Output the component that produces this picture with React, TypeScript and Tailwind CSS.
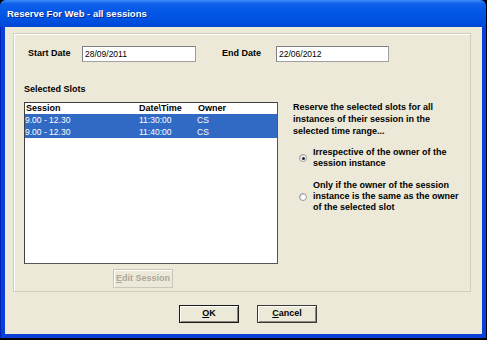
import React from "react";

const F = { fontFamily: '"Liberation Sans", Arial, sans-serif' };

function Btn({ children, w, disabled, def }: { children: React.ReactNode; w: string; disabled?: boolean; def?: boolean }) {
  return (
    <div
      className={
        "flex items-center justify-center h-full text-[9px] font-bold " +
        w +
        " " +
        (disabled
          ? "border border-[#C9C7BA] text-[#ACA899] bg-[#ECE9D8] shadow-[inset_1px_1px_0_#ffffff]"
          : def
          ? "border border-[#1a1a1a] text-black bg-[#ECE9D8] shadow-[inset_1px_1px_0_#ffffff,inset_-1px_-1px_0_#8a8878]"
          : "border border-[#3a3a3a] text-black bg-[#ECE9D8] shadow-[inset_1px_1px_0_#ffffff,inset_-1px_-1px_0_#8a8878]")
      }
    >
      {children}
    </div>
  );
}

function Radio({ checked }: { checked?: boolean }) {
  return (
    <div className="w-[8px] h-[8px] rounded-full border border-[#9a9a9a] bg-white flex items-center justify-center shadow-[inset_1px_1px_1px_#d8d8d8]">
      {checked && <div className="w-[3px] h-[3px] rounded-full bg-[#222]" />}
    </div>
  );
}

export default function App() {
  return (
    <div className="w-[487px] h-[340px] bg-black" style={F}>
      <div className="w-[486px] h-[338px] flex flex-col bg-[#0A3FD8] rounded-t-[6px] overflow-hidden">
        <div className="h-[27px] shrink-0 flex items-center pl-[7px] bg-[linear-gradient(to_bottom,#3D8DF7_0%,#0E60EC_14%,#0457E6_45%,#0050E0_80%,#0046D2_100%)]">
          <span className="text-white font-bold text-[9.5px] leading-none [text-shadow:1px_1px_0_#0a2a8a]">
            Reserve For Web - all sessions
          </span>
        </div>
        <div className="flex-1 flex px-[4px] pb-[4px] border-l border-[#0022B8]">
          <div className="flex-1 bg-[#ECE9D8] flex flex-col pl-[8px] pr-[11px] pt-[6px]">
            {/* group box */}
            <div className="h-[259px] border border-[#D0D0BF] shadow-[inset_1px_1px_0_#ffffff] flex flex-col">
              {/* dates */}
              <div className="mt-[12px] h-[16px] flex items-center pl-[14px]">
                <div className="w-[54px] text-[9px] font-bold text-black">Start Date</div>
                <div className="w-[114px] h-full bg-white border border-[#A0A0A0] border-t-[#808080] border-l-[#808080] flex items-center pl-[2px] text-[8.5px] text-black">
                  28/09/2011
                </div>
                <div className="ml-[26px] w-[54px] text-[9px] font-bold text-black">End Date</div>
                <div className="w-[113px] h-full bg-white border border-[#A0A0A0] border-t-[#808080] border-l-[#808080] flex items-center pl-[2px] text-[8.5px] text-black">
                  22/06/2012
                </div>
              </div>
              {/* body */}
              <div className="flex mt-[21px] pl-[10px]">
                <div className="w-[254px] flex flex-col">
                  <div className="h-[12px] leading-[12px] text-[9px] font-bold text-black">Selected Slots</div>
                  <div className="mt-[7px] h-[162px] bg-white border border-[#555] border-t-[#404040] border-l-[#404040] flex flex-col">
                    <div className="h-[11px] flex items-center text-[9px] font-bold text-black">
                      <div className="w-[114px] pl-[1px]">Session</div>
                      <div className="w-[59px]">Date\Time</div>
                      <div>Owner</div>
                    </div>
                    {["11:30:00", "11:40:00"].map((t) => (
                      <div key={t} className="h-[12px] flex items-center bg-[#316AC5] text-white text-[8.5px]">
                        <div className="w-[114px]">9.00 - 12.30</div>
                        <div className="w-[58px]">{t}</div>
                        <div>CS</div>
                      </div>
                    ))}
                  </div>
                  <div className="mt-[5px] h-[19px] pl-[89px] flex">
                    <Btn w="w-[60px]" disabled>
                      <span>
                        <span className="underline">E</span>dit Session
                      </span>
                    </Btn>
                  </div>
                </div>
                <div className="ml-[15px] pt-[18px] flex flex-col text-[9px] font-bold text-black">
                  <div className="leading-[12px] whitespace-nowrap">
                    Reserve the selected slots for all
                    <br />
                    instances of their session in the
                    <br />
                    selected time range...
                  </div>
                  <div className="mt-[10px] flex items-center pl-[6px]">
                    <Radio checked />
                    <div className="ml-[6px] leading-[11px] whitespace-nowrap">
                      Irrespective of the owner of the
                      <br />
                      session instance
                    </div>
                  </div>
                  <div className="mt-[11px] flex items-center pl-[6px]">
                    <Radio />
                    <div className="ml-[6px] leading-[11px] whitespace-nowrap">
                      Only if the owner of the session
                      <br />
                      instance is the same as the owner
                      <br />
                      of the selected slot
                    </div>
                  </div>
                </div>
              </div>
            </div>
            {/* buttons */}
            <div className="mt-[13px] h-[18px] flex pl-[166px] gap-[18px]">
              <Btn w="w-[60px]" def>
                <span>
                  <span className="underline">O</span>K
                </span>
              </Btn>
              <Btn w="w-[60px]">
                <span>
                  <span className="underline">C</span>ancel
                </span>
              </Btn>
            </div>
          </div>
        </div>
      </div>
    </div>
  );
}
